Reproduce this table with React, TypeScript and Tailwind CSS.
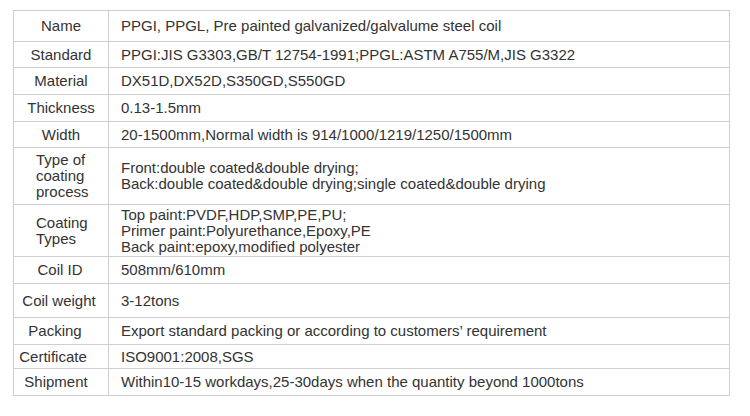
const rows: { label: string[]; value: string[]; h: string; align?: string }[] = [
  { label: ["Name"], value: ["PPGI, PPGL, Pre painted galvanized/galvalume steel coil"], h: "h-[31px]" },
  { label: ["Standard"], value: ["PPGI:JIS G3303,GB/T 12754-1991;PPGL:ASTM A755/M,JIS G3322"], h: "h-[26px]" },
  { label: ["Material"], value: ["DX51D,DX52D,S350GD,S550GD"], h: "h-[27px]" },
  { label: ["Thickness"], value: ["0.13-1.5mm"], h: "h-[27px]" },
  { label: ["Width"], value: ["20-1500mm,Normal width is 914/1000/1219/1250/1500mm"], h: "h-[26px]" },
  {
    label: ["Type of", "coating", "process"],
    value: [
      "Front:double coated&double drying;",
      "Back:double coated&double drying;single coated&double drying",
    ],
    h: "h-[57px]",
    align: "items-start pl-[22px]",
  },
  {
    label: ["Coating", "Types"],
    value: [
      "Top paint:PVDF,HDP,SMP,PE,PU;",
      "Primer paint:Polyurethance,Epoxy,PE",
      "Back paint:epoxy,modified polyester",
    ],
    h: "h-[52px]",
    align: "items-start pl-[22px]",
  },
  { label: ["Coil ID"], value: ["508mm/610mm"], h: "h-[27px]", align: "items-center pr-[2px]" },
  { label: ["Coil weight"], value: ["3-12tons"], h: "h-[34px]", align: "items-center pr-[4px]" },
  { label: ["Packing"], value: ["Export standard packing or according to customers’ requirement"], h: "h-[27px]", align: "items-center pr-[12px]" },
  { label: ["Certificate"], value: ["ISO9001:2008,SGS"], h: "h-[24px]", align: "items-center pr-[16px]" },
  { label: ["Shipment"], value: ["Within10-15 workdays,25-30days when the quantity beyond 1000tons"], h: "h-[27px]", align: "items-center pr-[10px]" },
]

export default function App() {
  return (
    <div className="w-[750px] h-[416px] bg-white pt-[10px] pl-[13px] font-[Arial,Liberation_Sans,sans-serif] text-[15px] leading-[16px] text-[#333]">
      <div className="w-[717px] border-t border-l border-[#cfcfcf]">
        {rows.map((r) => (
          <div key={r.label.join(" ")} className={`flex ${r.h}`}>
            <div
              className={`flex w-[95px] shrink-0 flex-col justify-center border-r border-b border-[#cfcfcf] ${r.align ?? "items-center"}`}
            >
              {r.label.map((l) => (
                <div key={l}>{l}</div>
              ))}
            </div>
            <div className="flex flex-1 flex-col justify-center border-r border-b border-[#cfcfcf] pl-[12px]">
              {r.value.map((v) => (
                <div key={v}>{v}</div>
              ))}
            </div>
          </div>
        ))}
      </div>
    </div>
  )
}
